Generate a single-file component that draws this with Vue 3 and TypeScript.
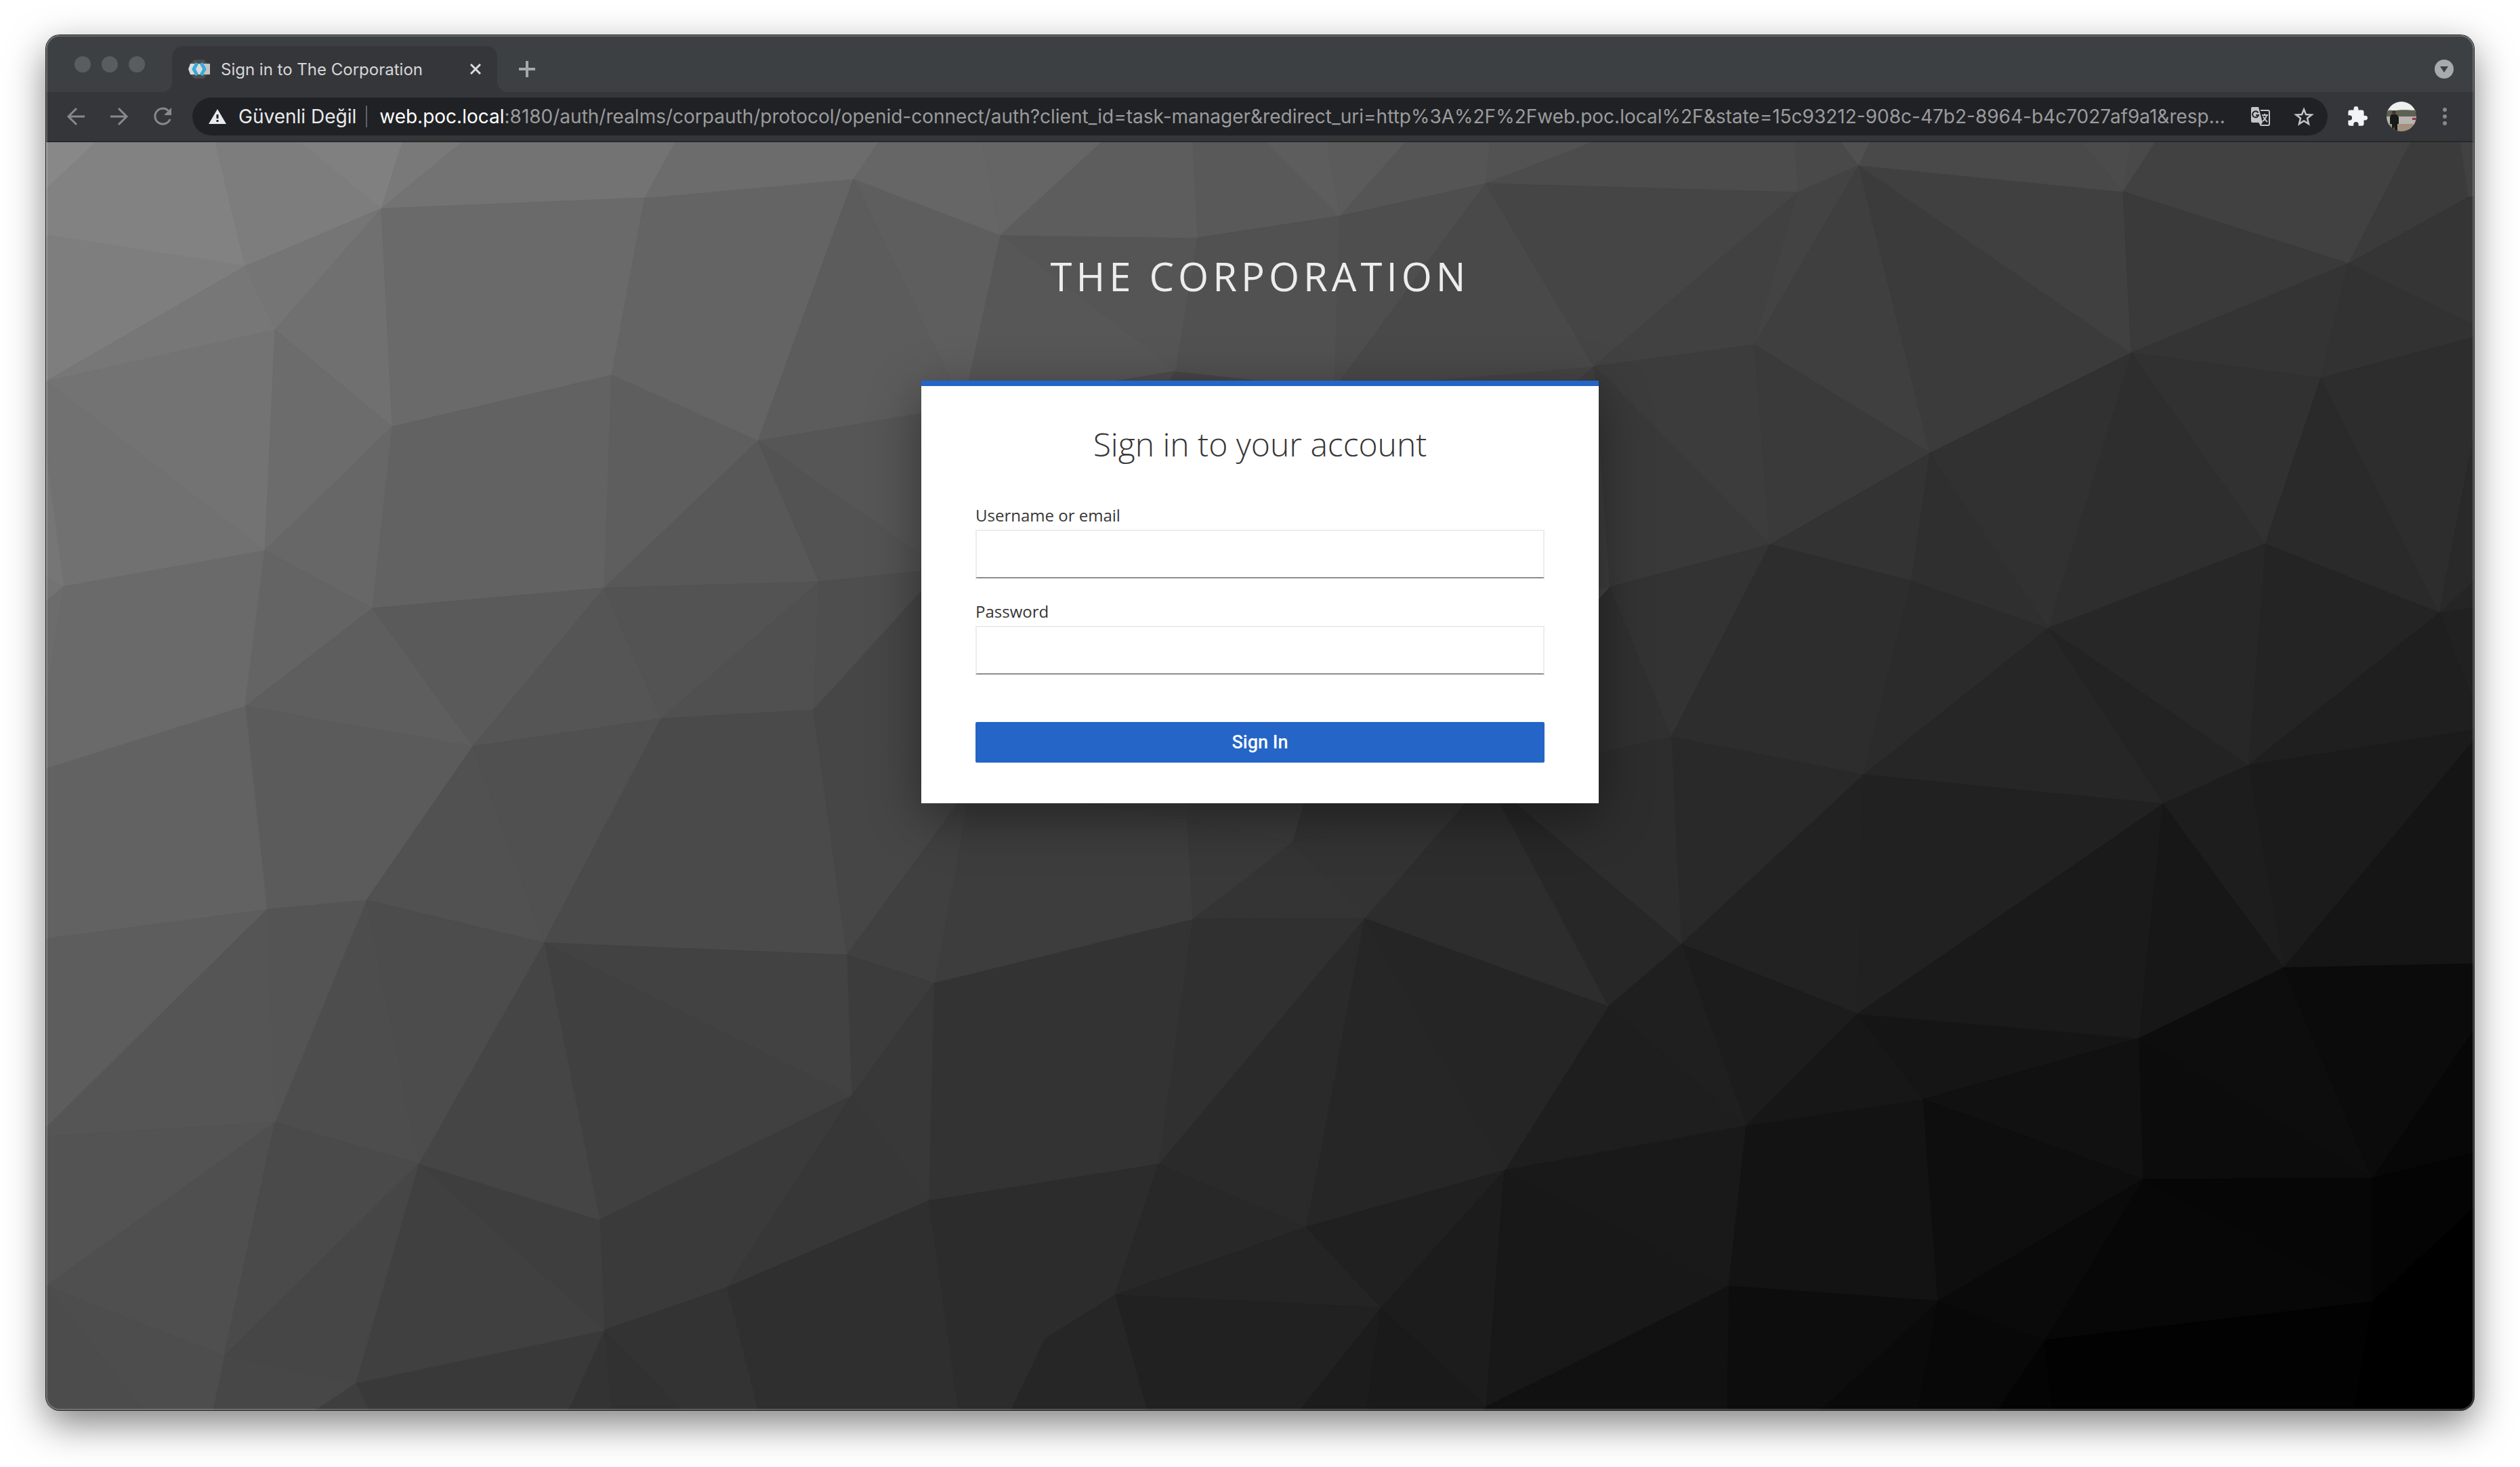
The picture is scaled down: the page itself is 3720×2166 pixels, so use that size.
<script setup lang="ts">
import { ref } from 'vue'

type Point = [number, number]

const username = ref('')
const password = ref('')

// Corner points of the faceted backdrop: a = left, c/d = centre, e/f/h = middle right, g/i = right.
const points: Record<string, Point> = {
  a1: [563, 308], a2: [362, 393], a3: [406, 487], a5: [579, 630], a6: [903, 554], a7: [952, 292],
  a8: [391, 813], a9: [94, 866], a10: [550, 898], a11: [892, 868], a12: [362, 1043], a13: [698, 1102], a14: [976, 1061],
  b1: [394, 1343], b2: [541, 1329], b3: [803, 1392], b4: [406, 1657], b5: [618, 1718], b7: [331, 2002],
  b8: [525, 2042], b9: [885, 1801], b10: [892, 1964],
  c1: [1260, 264], c2: [1477, 347], c3: [1768, 351], c4: [1736, 548], c5: [1119, 651], c6: [1209, 859], c7: [1201, 1048],
  d1: [1250, 1410], d2: [1379, 1451], d3: [1257, 1618], d4: [1371, 1773], d5: [1710, 1719], d6: [1760, 1357],
  d7: [1752, 1209], d8: [1073, 1901], d9: [1646, 1912], d10: [1543, 1976],
  e1: [1978, 319], e2: [2193, 271], e3: [2353, 541], e4: [2590, 509], e5: [2654, 284], e6: [2744, 244],
  e7: [2613, 804], e8: [2376, 867], e9: [2467, 1088],
  f1: [1907, 1244], f2: [2014, 1356], f3: [2374, 1486], f4: [2482, 1394], f5: [2751, 1144], f6: [2742, 1497],
  f7: [2578, 1662], f8: [2221, 1728], f9: [1928, 1812], f10: [2039, 1931], f11: [2552, 1899], f12: [2194, 2077],
  g2: [3134, 283], g3: [3467, 389], g4: [3644, 291], g5: [3146, 521], g6: [3426, 558], g7: [2849, 669],
  g8: [2822, 858], g9: [3023, 928], g10: [3344, 803], g11: [3601, 905], g12: [3319, 1130],
  h1: [1390, 840], h2: [1433, 1160], h3: [1970, 574], h4: [2194, 1150], h5: [1422, 600], h6: [1700, 600],
  h7: [2330, 560], h8: [2330, 875], h9: [2330, 920], h10: [1766, 1140], h11: [1935, 1150],
  i2: [3193, 1187], i4: [3371, 1429], i5: [3158, 1533], i7: [2839, 1623], i8: [3164, 1741], i9: [3502, 1740],
  i10: [2861, 1921], i11: [3018, 1979], i12: [3502, 1922],
}

const LEFT = 68
const RIGHT = 3652
const TOP = 210
const BOTTOM = 2082

// A token is a named point, or a border letter (l, r, t, b) and "=" and the coordinate along that border.
function resolve(token: string): Point {
  const [edge, value] = token.split('=')
  if (value === undefined) return points[token]
  const n = Number(value)
  if (edge === 'l') return [LEFT, n]
  if (edge === 'r') return [RIGHT, n]
  if (edge === 't') return [n, TOP]
  return [n, BOTTOM]
}

// Grey level, then the outline of the facet.
const facetData = `
136 t=68 t=142 l=279
130 t=142 t=318 a2 l=347 l=279
125 t=318 t=444 a1 a2
128 t=444 t=594 a1
121 t=594 t=682 a1
115 t=682 t=997 a7 a1
126 l=347 a2 l=563
119 l=563 a2 a3
117 a2 a1 a3
112 a1 a5 a3
106 a1 a7 a6 a5
115 l=563 a3 a8
113 l=563 a8 a9 l=674
118 l=674 a9 l=853
115 l=853 a9 l=888
108 l=888 a9 l=1033
108 a3 a5 a8
103 a5 a10 a8
98 a5 a6 a11 a10
106 a9 a8 a12 l=1135 l=1033
100 a8 a10 a12
94 a10 a13 a12
90 a10 a11 a13
85 a11 a14 a13
91 a12 a13 b2 b1
98 l=1135 a12 b1 l=1386
100 a6 a7 c1 c5
94 a6 c5 a11
88 a11 c5 c6
83 a11 c6 a14
80 c6 a14 c7
81 a13 b3 b2
80 a13 a14 b3
74 a14 c7 d1 b3
70 c7 h2 d1
94 c1 c2 h5
92 c1 h5 c5
85 c2 c3 c4
87 c2 c4 h5
86 c5 h5 h1
83 c5 h1 c6
78 c6 h1 c7
70 h1 h2 c7
77 h5 c4 h6
70 c4 h3 h6
108 t=997 t=1297 c1 a7
102 t=1297 t=1450 c2 c1
101 t=1450 t=1626 c2
93 t=1626 t=1761 c3 c2
89 t=1761 t=1869 e1 c3
93 t=1869 t=1959 e1
91 t=1959 t=2075 e1
85 t=2075 t=2200 e2 e1
82 t=2200 t=2352 e2
76 t=2352 t=2650 e5 e2
73 t=2650 t=2718 e6 e5
80 t=2718 t=2761 e6
81 c3 e1 h3 c4
78 e1 e2 h3
73 e2 e3 h3
69 e2 e5 e3
65 e5 e4 e3
67 e5 e6 e4
60 e3 e4 e7
57 e3 e7 e8
62 e3 e8 h8 h7
51 e8 e7 e9
48 e8 e9 h4 h9
63 e4 e6 g7
58 e4 g7 e7
59 e6 g5 g7
64 e6 g2 g5
73 e6 t=2761 t=3074 g2
75 t=3074 t=3147 g2
73 t=3147 t=3182 g2
65 t=3182 t=3559 g3 g2
59 t=3559 t=3632 g4 g3
65 t=3632 r=210 r=290 g4
58 g2 g3 g5
52 g3 g6 g5
50 g3 r=479 r=498 g6
53 g3 g4 r=290 r=479
49 g5 g6 g10
46 g5 g10 g9
49 g5 g9 g7
51 e7 g7 g8
47 g7 g9 g8
45 e7 g8 f5 e9
43 g8 g9 f5
42 g6 g11 g10
45 g6 r=498 r=643 g11
41 g11 r=643 r=858
37 g11 r=858 r=898
33 g11 r=898 r=1039
36 g10 g11 g12
31 g11 r=1039 r=1078 g12
39 g9 g10 g12
35 g9 g12 i2
38 g9 i2 f5
27 g12 r=1078 r=1093 i4
29 g12 i4 i2
21 i4 r=1093 r=1423
33 f5 i2 f6
41 e9 f5 f4
45 e9 f4 h4
39 h4 f4 f3
45 h4 f3 f2
51 h4 f2 f1
51 h4 f1 h11
58 f1 d7 h10 h11
34 f4 f5 f6
28 f4 f6 f7
31 f3 f4 f7
30 f3 f7 f8
37 f2 f3 f8
38 f2 f8 f9
42 f2 f9 d5
52 d6 f1 f2
48 d6 f2 d5
57 d6 d7 f1
51 d6 d5 d4 d2
61 d2 h2 d7 d6
60 h2 h10 d7
64 d1 h2 d2
60 d1 d2 d3
56 d2 d4 d3
66 b3 d1 d3
64 b3 d3 b9
58 b9 d3 d8 b10
55 d3 d4 d8
47 d8 d4 b=1415 b=1119
44 d4 d5 d9 d10 b=1493 b=1415
40 d5 f9 d9
36 d9 f9 f10
33 d9 f10 b=1919 b=1693
38 d9 b=1693 b=1493 d10
51 b10 d8 b=1119 b=1007
49 b10 b=1007 b=903
51 b10 b=903 b=839
57 b8 b10 b=839 b=545
62 b8 b=545 b=465
62 b5 b9 b10
64 b5 b10 b8
69 b5 b3 b9
76 b2 b3 b5
77 b2 b5 b4
84 b1 b2 b4
93 l=1386 b1 l=1665
85 l=1665 b1 b4 l=1678
83 l=1678 b4 l=1899
79 l=1899 b4 b7
74 b4 b5 b7
70 b7 b5 b8
71 b7 b8 b=465 b=314
77 l=1899 b7 b=314 b=211
76 l=1899 b=211 b=68
32 f8 f9 f10
28 f8 f10 f12
28 f10 b=1919 b=2018
26 f10 b=2018 b=2190 f12
24 f8 f12 f11
25 f8 f11 f7
19 f7 f11 i10 i7
23 f7 f6 i7
21 f6 i5 i7
26 f6 i2 i5
23 i5 i2 i4
17 i7 i5 i8
14 i7 i8 i10
13 i5 i4 i9
12 i5 i9 i8
11 i4 r=1423 r=1521 i9
7 i9 r=1521 r=1702
4 i9 r=1702 r=1783 i12
0 i12 r=1783 r=2082 b=3475
6 i8 i9 i12
7 i8 i12 i11
10 i8 i11 i10
2 i11 i12 b=3475 b=3029
4 i11 b=3029 b=2948
8 i10 i11 b=2948 b=2831
10 i10 b=2831 b=2687
13 f11 i10 b=2687 b=2549
17 f11 b=2549 b=2190 f12
`

const facets = facetData
  .trim()
  .split('\n')
  .map((line) => {
    const [grey, ...outline] = line.split(' ')
    return {
      color: `rgb(${grey}, ${grey}, ${grey})`,
      outline: outline.map((token) => resolve(token).join(',')).join(' '),
    }
  })
</script>

<template>
  <div class="desktop">
    <div class="window">
      <header class="tabstrip">
        <div class="lights"><span></span><span></span><span></span></div>
        <div class="tab">
          <svg class="favicon" viewBox="0 0 32 28" aria-hidden="true">
            <path d="M9 0h14l5 6v16l-5 6H9l-6-6V6z" fill="#4d4d4d" />
            <path d="M3 6h27v16H3l-3-8z" fill="#dcdcdc" />
            <path d="M23 6h9v16h-9l4-8z" fill="#c4c4c4" />
            <path d="M13 5 8 14l5 9" fill="none" stroke="#3ba9d8" stroke-width="5" />
            <path d="m19 5 5 9-5 9" fill="none" stroke="#3ba9d8" stroke-width="5" />
          </svg>
          <span class="tab-title">Sign in to The Corporation</span>
          <button class="plain" type="button" aria-label="Close tab">
            <svg width="16" height="16" viewBox="0 0 16 16"><path d="m1 1 14 14M15 1 1 15" stroke="#dadce0" stroke-width="3" /></svg>
          </button>
        </div>
        <button class="plain new-tab" type="button" aria-label="New tab">
          <svg width="24" height="24" viewBox="0 0 24 24"><path d="M12 0v24M0 12h24" stroke="#a6a9ab" stroke-width="4" /></svg>
        </button>
        <button class="plain tab-search" type="button" aria-label="Search tabs">
          <svg width="28" height="28" viewBox="0 0 28 28"><circle cx="14" cy="14" r="14" fill="#a7abae" /><path d="M8 10h12l-6 9z" fill="#3c4043" /></svg>
        </button>
      </header>

      <nav class="toolbar">
        <div class="nav-buttons">
          <button class="plain" type="button" aria-label="Back">
            <svg width="28" height="28" viewBox="0 0 28 28" fill="none" stroke="#87898c" stroke-width="3"><path d="M27 14H3M15 2 3 14l12 12" /></svg>
          </button>
          <button class="plain" type="button" aria-label="Forward">
            <svg width="28" height="28" viewBox="0 0 28 28" fill="none" stroke="#87898c" stroke-width="3"><path d="M1 14h24M13 2l12 12-12 12" /></svg>
          </button>
          <button class="plain" type="button" aria-label="Reload">
            <svg width="28" height="28" viewBox="0 0 28 28"><path d="M22.500 5.500A11.500 11.500 0 1 0 25 18" fill="none" stroke="#87898c" stroke-width="3" /><path d="M27 1v11H16z" fill="#87898c" /></svg>
          </button>
        </div>
        <div class="address">
          <svg class="warning" viewBox="0 0 26 22" aria-hidden="true"><path d="M13 0 26 22H0z" fill="#e8eaed" /><path d="M13 8v6M13 16v3" stroke="#202124" stroke-width="3" /></svg>
          <span class="security">Güvenli Değil</span>
          <span class="divider"></span>
          <span class="url"><b>web.poc.local</b>:8180/auth/realms/corpauth/protocol/openid-connect/auth?client_id=task-manager&amp;redirect_uri=http%3A%2F%2Fweb.poc.local%2F&amp;state=15c93212-908c-47b2-8964-b4c7027af9a1&amp;resp...</span>
          <button class="plain" type="button" aria-label="Translate">
            <svg width="28" height="28" viewBox="0 0 28 28">
              <path d="M14 5h11a2 2 0 0 1 2 2v18a2 2 0 0 1-2 2H15l-3-4" fill="none" stroke="#c4c4c5" stroke-width="2" />
              <path d="M2 0h9l6 23H2a2 2 0 0 1-2-2V2a2 2 0 0 1 2-2z" fill="#c4c4c5" />
              <path d="M13 23h4l-4 5z" fill="#c4c4c5" />
              <path d="M10.500 8.500A4.500 4.500 0 1 0 11 12H7" fill="none" stroke="#202124" stroke-width="2" />
              <path d="M16 12h9M20 10v2M23 12c-1 4-3 7-6 9M18 14c1 3 3 5 6 8" fill="none" stroke="#c4c4c5" stroke-width="2" />
            </svg>
          </button>
          <button class="plain" type="button" aria-label="Bookmark this page">
            <svg width="30" height="28" viewBox="0 0 30 28"><path d="m15 3.500 3 7.500 8.500.5-6.500 5 2 8.500-7-4.500L8 25l2-8.500-6.500-5 8.500-.5z" fill="none" stroke="#c4c4c5" stroke-width="2.500" /></svg>
          </button>
        </div>
        <div class="tools">
          <button class="plain" type="button" aria-label="Extensions">
            <svg width="30" height="30" viewBox="1 1 22 22"><path d="M20.500 11H19V7c0-1.100-.9-2-2-2h-4V3.500a2.500 2.500 0 0 0-5 0V5H4c-1.100 0-2 .9-2 2v3.800h1.500a2.700 2.700 0 0 1 0 5.400H2V20c0 1.100.9 2 2 2h3.800v-1.500a2.700 2.700 0 0 1 5.400 0V22H17c1.100 0 2-.9 2-2v-4h1.500a2.500 2.500 0 0 0 0-5z" fill="#f1f3f4" /></svg>
          </button>
          <button class="plain" type="button" aria-label="Profile">
            <svg width="44" height="44" viewBox="0 0 44 44">
              <defs><clipPath id="avatar-clip"><circle cx="22" cy="22" r="22" /></clipPath></defs>
              <g clip-path="url(#avatar-clip)">
                <path d="M0 0h44v16H0z" fill="#efefef" />
                <path d="M0 14c6-3 9 0 14-1s16-1 30 0v11H0z" fill="#5d6153" />
                <path d="M0 22h44v13H0z" fill="#b9b4b0" />
                <path d="M0 33h44v11H0z" fill="#a3917f" />
                <path d="M38 24h6v3h-6z" fill="#9d2c4a" />
                <circle cx="11" cy="16" r="3" fill="#4a362c" />
                <path d="M7 19h8l3 4v10h-2v11h-4l-1-8-1 8H8V33H5V23z" fill="#161a18" />
              </g>
            </svg>
          </button>
          <button class="plain menu" type="button" aria-label="Menu">
            <svg width="6" height="28" viewBox="0 0 6 28" fill="#87898c"><circle cx="3" cy="4" r="3" /><circle cx="3" cy="14" r="3" /><circle cx="3" cy="24" r="3" /></svg>
          </button>
        </div>
      </nav>

      <main class="page">
        <svg class="backdrop" viewBox="68 210 3584 1872" preserveAspectRatio="xMidYMid slice" aria-hidden="true">
          <polygon v-for="(facet, index) in facets" :key="index" :points="facet.outline" :fill="facet.color" :stroke="facet.color" />
        </svg>
        <h1 class="realm">The Corporation</h1>
        <form class="card" @submit.prevent>
          <h2>Sign in to your account</h2>
          <div class="field">
            <label for="username">Username or email</label>
            <input id="username" v-model="username" type="text" autocomplete="off" />
          </div>
          <div class="field">
            <label for="password">Password</label>
            <input id="password" v-model="password" type="password" autocomplete="off" />
          </div>
          <button class="submit" type="submit">Sign In</button>
        </form>
      </main>
    </div>
  </div>
</template>

<style>
body {
  margin: 0;
  background: #fff;
}
</style>

<style scoped>
* {
  box-sizing: border-box;
}

.desktop {
  display: flex;
  min-height: 100vh;
  padding: 52px 68px 84px;
  overflow: hidden;
  font-family: Inter, "Liberation Sans", sans-serif;
}

.window {
  position: relative;
  display: flex;
  flex: 1;
  flex-direction: column;
  min-width: 0;
  overflow: hidden;
  border-radius: 20px;
  box-shadow: 0 0 0 1px #1c1d1e, 0 20px 56px rgba(0, 0, 0, 0.5);
}

.window::after {
  position: absolute;
  inset: 0;
  border: 2px solid rgba(255, 255, 255, 0.22);
  border-radius: 20px;
  content: "";
  pointer-events: none;
}

.plain {
  display: flex;
  flex: none;
  align-items: center;
  justify-content: center;
  padding: 0;
  border: 0;
  background: none;
}

.tabstrip {
  display: flex;
  align-items: flex-end;
  height: 84px;
  padding: 0 30px 0 42px;
  background: #3c4043;
}

.lights {
  display: flex;
  gap: 16px;
  margin-bottom: 29px;
}

.lights span {
  width: 24px;
  height: 24px;
  border-radius: 50%;
  background: #5a5d60;
}

.tab {
  position: relative;
  display: flex;
  align-items: center;
  width: 480px;
  height: 68px;
  margin-left: 40px;
  padding: 0 24px;
  border-radius: 16px 16px 0 0;
  background: #35363a;
}

.tab::before,
.tab::after {
  position: absolute;
  bottom: 0;
  width: 16px;
  height: 16px;
  content: "";
}

.tab::before {
  right: 100%;
  background: radial-gradient(circle at 0 0, transparent 16px, #35363a 16px);
}

.tab::after {
  left: 100%;
  background: radial-gradient(circle at 100% 0, transparent 16px, #35363a 16px);
}

.favicon {
  width: 32px;
  height: 28px;
}

.tab-title {
  flex: 1;
  margin-left: 16px;
  color: #d6d7d9;
  font-size: 24px;
  white-space: nowrap;
}

.new-tab {
  height: 68px;
  margin-left: 32px;
}

.tab-search {
  height: 68px;
  margin-left: auto;
}

.toolbar {
  display: flex;
  align-items: center;
  height: 74px;
  padding: 0 40px 0 30px;
  border-bottom: 2px solid #28292c;
  background: #35363a;
}

.nav-buttons {
  display: flex;
  gap: 36px;
}

.address {
  display: flex;
  flex: 1;
  align-items: center;
  min-width: 0;
  height: 56px;
  margin-left: 30px;
  padding: 0 20px 0 24px;
  border-radius: 28px;
  background: #202124;
  font-size: 28px;
}

.warning {
  flex: none;
  width: 26px;
  height: 22px;
}

.security {
  margin-left: 18px;
  color: #e8eaed;
  white-space: nowrap;
}

.divider {
  width: 2px;
  height: 32px;
  margin: 0 18px 0 14px;
  background: #5f6368;
}

.url {
  flex: 1;
  min-width: 0;
  overflow: hidden;
  color: #9a9b9d;
  white-space: nowrap;
}

.url b {
  color: #fff;
  font-weight: 400;
}

.address .plain {
  margin-left: 35px;
}

.tools {
  display: flex;
  align-items: center;
  gap: 28px;
  margin-left: 29px;
}

.menu {
  margin-left: 11px;
}

.page {
  position: relative;
  display: flex;
  flex: 1;
  flex-direction: column;
  align-items: center;
  padding: 124px 40px 80px;
  background: #444;
  font-family: "Open Sans", "Noto Sans", sans-serif;
}

.backdrop {
  position: absolute;
  inset: 0;
  width: 100%;
  height: 100%;
}

.realm {
  position: relative;
  margin: 0 0 80px;
  color: #ededed;
  font-size: 58px;
  font-weight: 400;
  letter-spacing: 6px;
  line-height: 148px;
  text-transform: uppercase;
}

.card {
  position: relative;
  display: flex;
  flex-direction: column;
  width: 100%;
  max-width: 1000px;
  padding: 54px 80px 60px;
  border-top: 8px solid #2565c7;
  background: #fff;
  box-shadow: 0 20px 70px rgba(0, 0, 0, 0.4);
}

h2 {
  margin: 0 0 52px;
  color: #363636;
  font-size: 48px;
  font-weight: 300;
  line-height: 64px;
  text-align: center;
}

.field {
  display: flex;
  flex-direction: column;
  margin-bottom: 28px;
}

.field label {
  color: #363636;
  font-size: 24px;
  line-height: 42px;
}

.field input {
  height: 72px;
  padding: 0 16px;
  border: 2px solid #ededed;
  border-bottom-color: #8b8d8f;
  border-radius: 0;
  background: #fff;
  font: inherit;
  font-size: 28px;
}

.submit {
  height: 60px;
  margin-top: 42px;
  border: 0;
  border-radius: 2px;
  background: #2565c7;
  color: #fff;
  font-family: Roboto, "Noto Sans", sans-serif;
  font-size: 27px;
  font-weight: 500;
}
</style>
